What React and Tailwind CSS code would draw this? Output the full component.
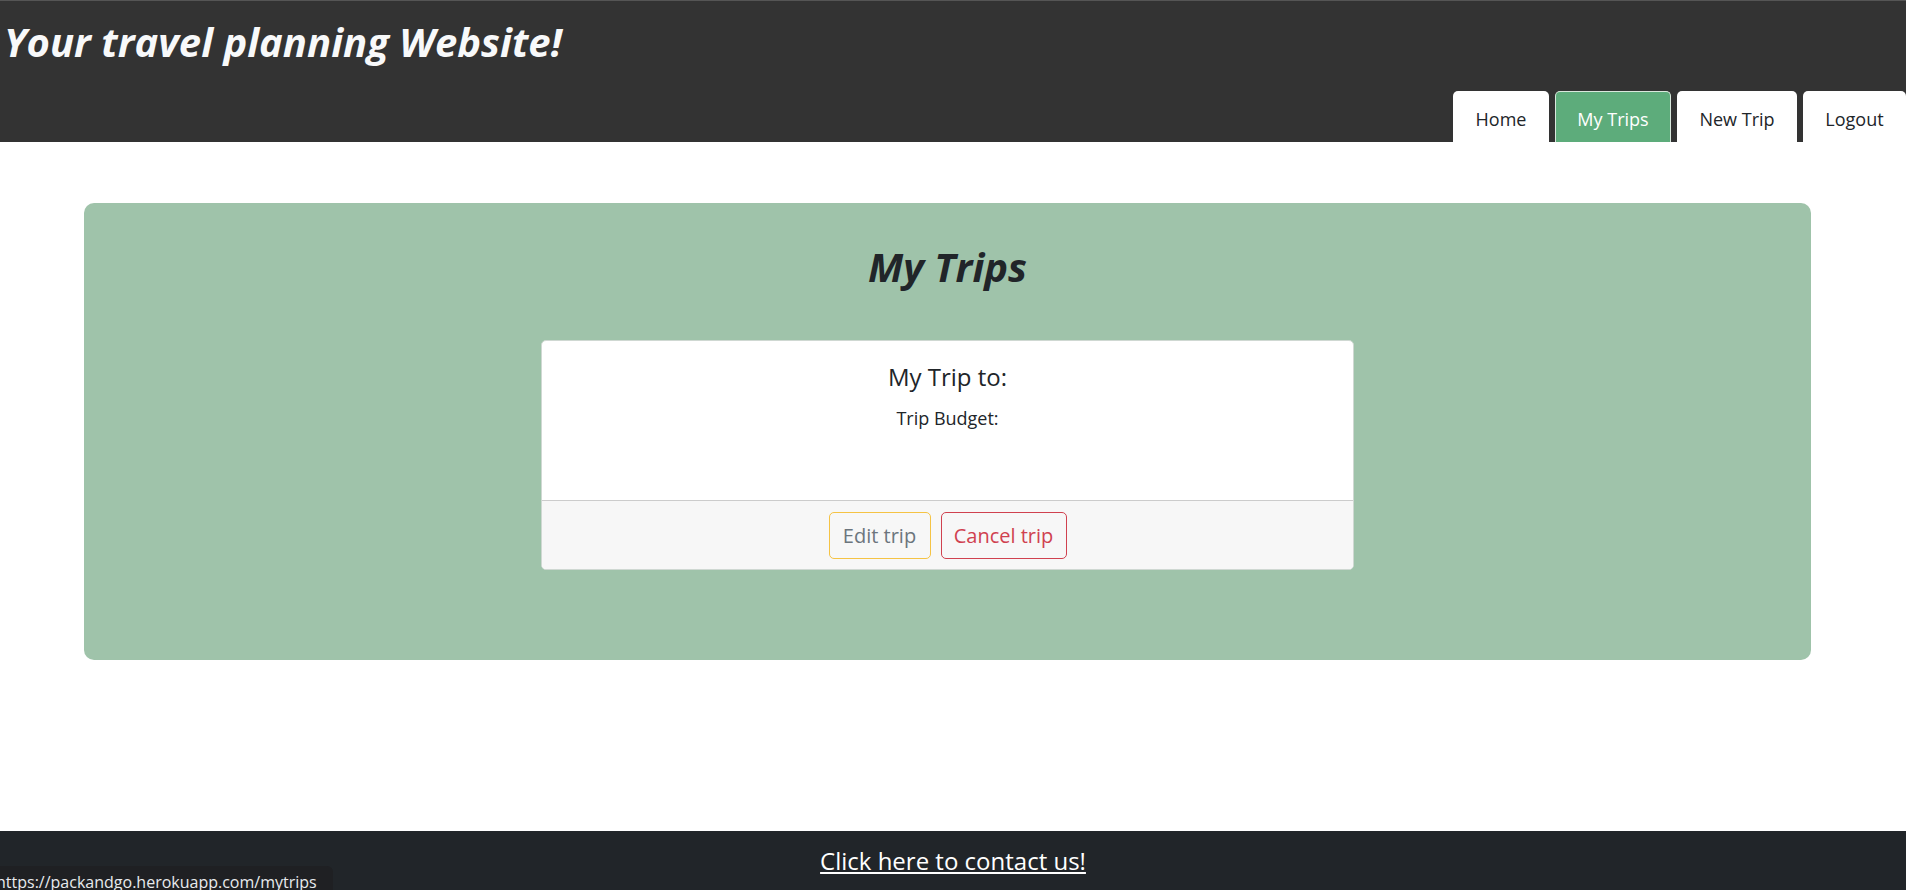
import React from 'react';

const tabs = [
    { label: 'Home', width: 'w-[96px]' },
    { label: 'My Trips', width: 'w-[116px]', active: true },
    { label: 'New Trip', width: 'w-[120px]' },
    { label: 'Logout', width: 'w-[103px]' },
];

const App = () => {
    return (
        <div className="relative min-h-screen flex flex-col bg-white font-['Open_Sans',sans-serif] text-[#212529]">
            {/* top bar */}
            <header className="h-[142px] flex flex-col bg-[#333333] border-t border-[#555555]">
                <h1 className="pl-[4px] pt-[17px] text-[40px] leading-[48px] font-bold italic text-[#f8f9fa]">
                    Your travel planning Website!
                </h1>
                <nav className="mt-auto flex justify-end gap-[6px]">
                    {tabs.map((tab) => (
                        <a
                            key={tab.label}
                            href="#"
                            className={
                                tab.active
                                    ? `${tab.width} h-[51px] flex items-center justify-center pt-[5px] rounded-t-[5px] border border-b-0 border-[#d9e8dd] bg-[#5dac7b] text-white text-[18px]`
                                    : `${tab.width} h-[51px] flex items-center justify-center pt-[5px] rounded-t-[5px] bg-white text-[#212529] text-[18px]`
                            }
                        >
                            {tab.label}
                        </a>
                    ))}
                </nav>
            </header>

            <main className="pt-[61px]">
                <section className="ml-[84px] mr-[95px] h-[457px] rounded-[10px] bg-[#9fc3aa] pt-[40px]">
                    <h2 className="text-center text-[40px] leading-[48px] font-bold italic text-[#212529]">My Trips</h2>

                    <div className="mx-auto mt-[49px] w-[813px] rounded-[5px] border border-[#cfd8d2] bg-white overflow-hidden">
                        <div className="h-[159px] pt-[21px] text-center">
                            <h4 className="text-[24px] leading-[29px] font-medium">My Trip to:</h4>
                            <p className="mt-[14px] text-[18px] leading-[27px]">Trip Budget:</p>
                        </div>
                        <div className="h-[69px] flex items-center justify-center gap-[10px] border-t border-[#cccccc] bg-[#f7f7f7] pt-[1px]">
                            <button className="w-[102px] h-[47px] rounded-[5px] border border-[#f5c344] text-[20px] text-[#6c757d]">
                                Edit trip
                            </button>
                            <button className="w-[126px] h-[47px] rounded-[5px] border border-[#d0414f] text-[20px] text-[#d0414f]">
                                Cancel trip
                            </button>
                        </div>
                    </div>
                </section>
            </main>

            <footer className="mt-auto h-[59px] flex items-center justify-center bg-[#212529]">
                <a href="#" className="text-[24px] leading-[32px] text-white underline">
                    Click here to contact us!
                </a>
            </footer>

            {/* browser status bubble */}
            <div className="absolute left-0 bottom-0 h-[24px] w-[333px] overflow-hidden rounded-tr-[6px] bg-[#1f2023] pt-[8px]">
                <span className="block -ml-[4px] whitespace-nowrap text-[16px] leading-[16px] text-[#e8eaed]">
                    https://packandgo.herokuapp.com/mytrips
                </span>
            </div>
        </div>
    );
};

export default App;
